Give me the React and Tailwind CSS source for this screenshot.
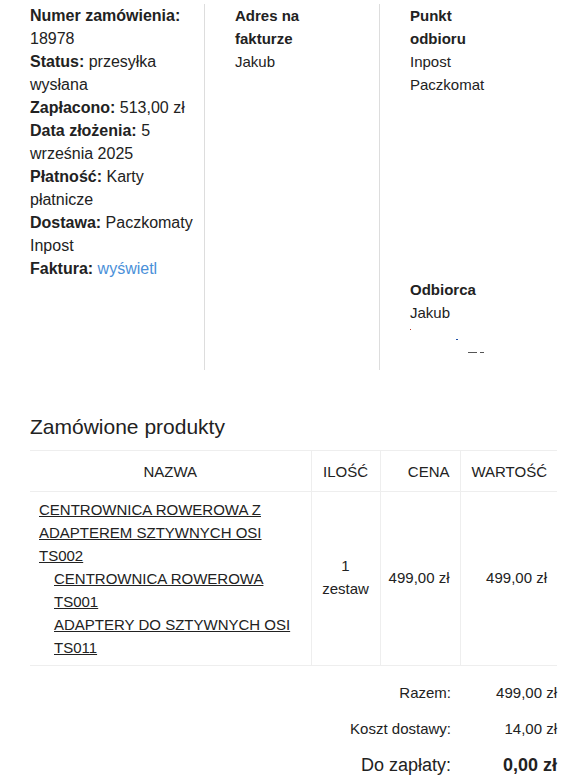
import React from 'react';

const products = {
  name: 'CENTROWNICA ROWEROWA Z ADAPTEREM SZTYWNYCH OSI TS002',
  parts: ['CENTROWNICA ROWEROWA TS001', 'ADAPTERY DO SZTYWNYCH OSI TS011'],
  qty: '1 zestaw',
  price: '499,00 zł',
  total: '499,00 zł',
};

const Row = ({ label, value }) => (
  <div className="flex justify-end items-center h-[36px]">
    <div className="pr-[9px] text-right">{label}</div>
    <div className="w-[97px] text-right">{value}</div>
  </div>
);

const App = () => {
  return (
    <div className="w-[572px] min-h-[778px] bg-white text-[#222] font-['Liberation_Sans',Arial,sans-serif] overflow-hidden">
      {/* order info columns */}
      <div className="flex mt-[4px]">
        <div className="w-[205px] h-[366px] pl-[30px] pr-[5px] border-r border-[#ddd] text-[16px] leading-[23px]">
          <div><b>Numer zamówienia:</b> 18978</div>
          <div><b>Status:</b> przesyłka wysłana</div>
          <div><b>Zapłacono:</b> 513,00 zł</div>
          <div><b>Data złożenia:</b> 5 września 2025</div>
          <div><b>Płatność:</b> Karty płatnicze</div>
          <div><b>Dostawa:</b> Paczkomaty Inpost</div>
          <div>
            <b>Faktura:</b> <a className="text-[#4a90d9]">wyświetl</a>
          </div>
        </div>
        <div className="w-[175px] h-[366px] pl-[30px] pr-[30px] border-r border-[#ddd] text-[15px] leading-[23px]">
          <div className="font-bold">Adres na fakturze</div>
          <div>Jakub</div>
        </div>
        <div className="w-[130px] pl-[30px] text-[15px] leading-[23px]">
          <div className="font-bold">Punkt odbioru</div>
          <div>Inpost</div>
          <div>Paczkomat</div>
          <div className="h-[182px]"></div>
          <div className="font-bold">Odbiorca</div>
          <div>Jakub</div>
          <div className="pt-[5px]">
            <div className="w-[1px] h-[1px] bg-[#c0392b]"></div>
            <div className="ml-[46px] mt-[9px] w-[2px] h-[1px] bg-[#1e4fa8]"></div>
            <div className="flex ml-[58px] mt-[12px] gap-[3px]">
              <div className="w-[9px] h-[1px] bg-[#555]"></div>
              <div className="w-[4px] h-[1px] bg-[#555]"></div>
            </div>
          </div>
        </div>
      </div>

      {/* products */}
      <div className="pl-[30px] pr-[15px]">
        <h2 className="mt-[45px] mb-[11px] text-[21px] leading-[24px] font-normal">Zamówione produkty</h2>
        <table className="w-[527px] table-fixed border-collapse text-[15px] leading-[23px]">
          <colgroup>
            <col className="w-[281px]" />
            <col className="w-[69px]" />
            <col className="w-[80px]" />
            <col className="w-[97px]" />
          </colgroup>
          <thead>
            <tr className="h-[41px] border-t border-b border-[#eee]">
              <th className="font-normal text-center border-r border-[#eee]">NAZWA</th>
              <th className="font-normal text-center border-r border-[#eee]">ILOŚĆ</th>
              <th className="font-normal text-right pr-[10px] border-r border-[#eee]">CENA</th>
              <th className="font-normal text-right pr-[10px]">WARTOŚĆ</th>
            </tr>
          </thead>
          <tbody>
            <tr className="border-b border-[#eee]">
              <td className="pl-[9px] pr-[13px] pt-[6px] pb-[6px] align-top border-r border-[#eee]">
                <a className="underline">{products.name}</a>
                {products.parts.map(p => (
                  <div key={p} className="pl-[15px]">
                    <a className="underline">{p}</a>
                  </div>
                ))}
              </td>
              <td className="px-[8px] pb-[3px] text-center align-middle border-r border-[#eee]">{products.qty}</td>
              <td className="pr-[10px] pb-[3px] text-right align-middle border-r border-[#eee]">{products.price}</td>
              <td className="pr-[10px] pb-[3px] text-right align-middle">{products.total}</td>
            </tr>
          </tbody>
        </table>

        {/* totals */}
        <div className="w-[527px] mt-[9px] text-[15px]">
          <Row label="Razem:" value="499,00 zł" />
          <Row label="Koszt dostawy:" value="14,00 zł" />
          <div className="flex justify-end items-center h-[36px] text-[18px]">
            <div className="pr-[9px] text-right">Do zapłaty:</div>
            <div className="w-[97px] text-right font-bold">0,00 zł</div>
          </div>
        </div>
      </div>
    </div>
  );
};

export default App;
